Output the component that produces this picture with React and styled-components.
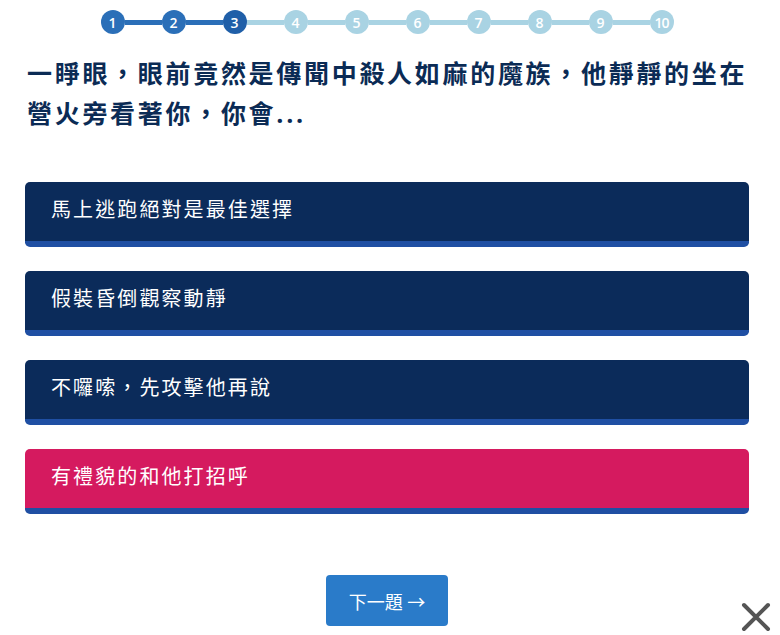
import React from "react";
import styled, { createGlobalStyle } from "styled-components";

const GlobalStyle = createGlobalStyle`
  html, body {
    margin: 0;
    padding: 0;
    background: #ffffff;
    font-family: "Open Sans", "Noto Sans CJK TC", sans-serif;
  }
`;

const steps = [1, 2, 3, 4, 5, 6, 7, 8, 9, 10];
const current = 3;

const options = [
  { text: "馬上逃跑絕對是最佳選擇" },
  { text: "假裝昏倒觀察動靜" },
  { text: "不囉嗦，先攻擊他再說" },
  { text: "有禮貌的和他打招呼", selected: true },
];

function App() {
  return (
    <Page>
      <GlobalStyle />
      <Quiz>
        <Progress>
          {steps.map((n, i) => (
            <React.Fragment key={n}>
              {i > 0 && <Line $done={n <= current} />}
              <Dot $done={n <= current} $current={n === current} $wide={n >= 10}>
                {n}
              </Dot>
            </React.Fragment>
          ))}
        </Progress>
        <Question>
          一睜眼，眼前竟然是傳聞中殺人如麻的魔族，他靜靜的坐在營火旁看著你，你會...
        </Question>
        <Options>
          {options.map((o) => (
            <Option key={o.text} $selected={o.selected}>
              {o.text}
            </Option>
          ))}
        </Options>
        <Footer>
          <NextButton>下一題 →</NextButton>
        </Footer>
      </Quiz>
      <Close aria-label="close">
        <svg width="30" height="30" viewBox="0 0 30 30">
          <path
            d="M3 3 L27 27 M27 3 L3 27"
            stroke="#555555"
            strokeWidth="4"
            strokeLinecap="round"
          />
        </svg>
      </Close>
    </Page>
  );
}

export default App;

const Page = styled.div`
  position: relative;
  width: 780px;
  height: 635px;
  overflow: hidden;
`;

const Quiz = styled.div`
  width: 724px;
  margin-left: 25px;
  padding-top: 10px;
`;

const Progress = styled.div`
  display: flex;
  align-items: center;
  justify-content: center;
  height: 24px;
`;

const Dot = styled.div`
  width: 24px;
  height: 24px;
  border-radius: 50%;
  flex-shrink: 0;
  display: flex;
  align-items: center;
  justify-content: center;
  font-family: "Open Sans", sans-serif;
  font-size: 14px;
  font-weight: 600;
  color: #ffffff;
  letter-spacing: ${(p) => (p.$wide ? "-1px" : "0")};
  background: ${(p) =>
    p.$current ? "#1f5fa8" : p.$done ? "#2b6fb8" : "#a9d3e3"};
`;

const Line = styled.div`
  width: 37px;
  height: 5px;
  background: ${(p) => (p.$done ? "#2b6fb8" : "#a9d3e3")};
`;

const Question = styled.h1`
  margin: 19px -8px 0 2px;
  font-size: 25px;
  line-height: 40px;
  font-weight: 700;
  color: #0b2b55;
  letter-spacing: 2.7px;
`;

const Options = styled.div`
  display: flex;
  flex-direction: column;
  gap: 24px;
  margin-top: 49px;
`;

const Option = styled.div`
  box-sizing: border-box;
  height: 65px;
  padding: 0 26px 6px;
  display: flex;
  align-items: center;
  border-radius: 5px;
  border-bottom: 6px solid #1f4fa3;
  background: ${(p) => (p.$selected ? "#d51a5f" : "#0b2b5a")};
  color: #ffffff;
  font-size: 20px;
  letter-spacing: 2.1px;
  cursor: pointer;
`;

const Footer = styled.div`
  display: flex;
  justify-content: center;
  margin-top: 61px;
`;

const NextButton = styled.button`
  width: 122px;
  height: 51px;
  border: none;
  border-radius: 4px;
  background: #2a7bc9;
  color: #ffffff;
  font-family: "Open Sans", "Noto Sans CJK TC", sans-serif;
  font-size: 18px;
  cursor: pointer;
`;

const Close = styled.div`
  position: absolute;
  right: 9px;
  bottom: 3px;
  width: 30px;
  height: 30px;
`;
